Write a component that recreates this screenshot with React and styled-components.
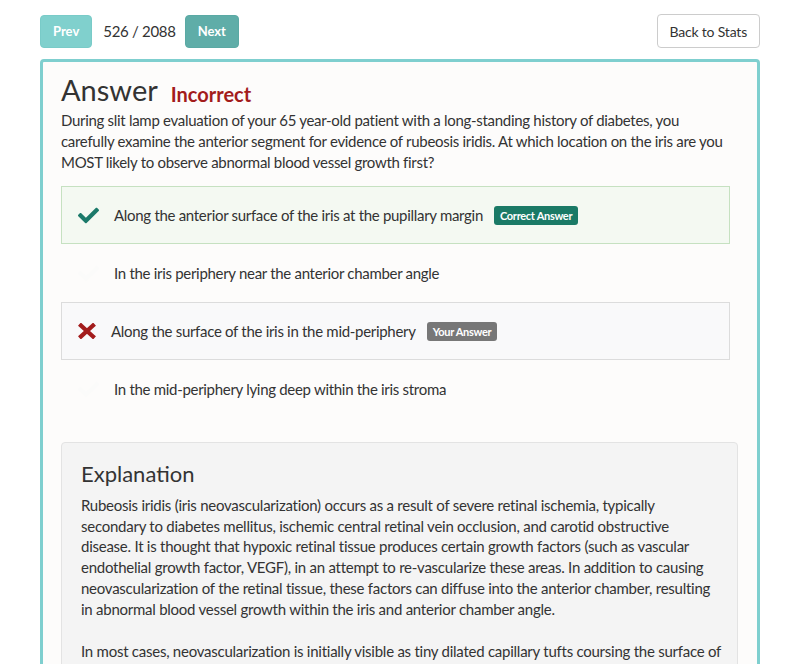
import React from 'react';
import styled, { createGlobalStyle } from 'styled-components';
import { FaCheck } from 'react-icons/fa';

const GlobalStyle = createGlobalStyle`
  body {
    margin: 0;
    background: #ffffff;
    font-family: Lato, "Open Sans", sans-serif;
    color: #333;
  }
`;

const Page = styled.div`
  padding: 14px 40px 0 40px;
  width: 720px;
`;

const Toolbar = styled.div`
  display: flex;
  align-items: center;
  justify-content: space-between;
  margin-bottom: 11px;
`;

const Pager = styled.div`
  display: flex;
  align-items: center;
  gap: 11px;
`;

const NavButton = styled.button`
  height: 33px;
  padding: 0 12px;
  margin-left: ${(p) => (p.dark ? '-2px' : '0')};
  border: 1px solid ${(p) => (p.dark ? '#5aa9a4' : '#79cbc8')};
  border-radius: 4px;
  background: ${(p) => (p.dark ? '#5fada8' : '#80d0cd')};
  color: #fff;
  font-family: Lato, sans-serif;
  font-weight: 700;
  font-size: 13px;
`;

const Counter = styled.span`
  font-size: 15px;
  letter-spacing: -0.3px;
  color: #333;
`;

const StatsButton = styled.button`
  height: 34px;
  padding: 0 12px;
  border: 1px solid #ccc;
  border-radius: 4px;
  background: #fff;
  color: #333;
  font-family: Lato, sans-serif;
  font-size: 14px;
  letter-spacing: -0.2px;
`;

const Panel = styled.div`
  border: 3px solid #7fcfcf;
  border-radius: 4px;
  background: #fdfcfb;
  padding: 10px 19px 40px 18px;
`;

const TitleRow = styled.div`
  display: flex;
  align-items: baseline;
`;

const Title = styled.h1`
  margin: 0;
  font-size: 29px;
  font-weight: 400;
  color: #333;
`;

const Verdict = styled.span`
  margin-left: 13px;
  font-size: 20px;
  font-weight: 700;
  color: #a31c1c;
  position: relative;
  top: 1px;
`;

const Question = styled.p`
  margin: 3px 0 13px;
  font-size: 15px;
  line-height: 21px;
  letter-spacing: -0.3px;
  padding-right: 10px;
`;

const Options = styled.div`
  margin-right: 8px;
  display: flex;
  flex-direction: column;
`;

const Option = styled.div`
  display: flex;
  align-items: center;
  height: 58px;
  box-sizing: border-box;
  padding: 0 16px;
  border: 1px solid ${(p) => p.border || 'transparent'};
  background: ${(p) => p.bg || 'transparent'};
  font-size: 15px;
  letter-spacing: -0.3px;
`;

const Icon = styled.span`
  display: flex;
  align-items: center;
  margin-right: ${(p) => p.gap}px;
  color: ${(p) => p.color};
  font-size: ${(p) => p.size}px;
`;

const Badge = styled.span`
  margin-left: 11px;
  padding: 3px 6px;
  border-radius: 3px;
  background: ${(p) => p.bg};
  color: #fff;
  font-size: 11px;
  font-weight: 700;
  letter-spacing: -0.3px;
`;

const Explanation = styled.div`
  margin-top: 24px;
  background: #f4f4f4;
  border: 1px solid #e3e3e3;
  border-radius: 4px;
  padding: 17px 10px 20px 19px;
`;

const ExplTitle = styled.h2`
  margin: 0 0 8px;
  font-size: 22px;
  font-weight: 400;
  color: #333;
`;

const ExplText = styled.p`
  margin: 0 0 22px;
  font-size: 15px;
  line-height: 20.7px;
  letter-spacing: -0.25px;
`;

const Cross = () => (
  <svg width="18" height="16" viewBox="0 0 18 16">
    <path d="M3 2.5 L15 13.5 M15 2.5 L3 13.5" stroke="currentColor" strokeWidth="4.2" strokeLinecap="square" />
  </svg>
);

const options = [
  { text: 'Along the anterior surface of the iris at the pupillary margin', state: 'correct' },
  { text: 'In the iris periphery near the anterior chamber angle' },
  { text: 'Along the surface of the iris in the mid-periphery', state: 'wrong' },
  { text: 'In the mid-periphery lying deep within the iris stroma' },
];

function OptionRow({ option }) {
  if (option.state === 'correct') {
    return (
      <Option bg="#f4f9f2" border="#c6e1c1">
        <Icon color="#1b7a6a" size={21} gap={15}><FaCheck /></Icon>
        {option.text}
        <Badge bg="#1a7a66">Correct Answer</Badge>
      </Option>
    );
  }
  if (option.state === 'wrong') {
    return (
      <Option bg="#f9f9fa" border="#dcdcdc">
        <Icon color="#a31c1c" size={18} gap={15}><Cross /></Icon>
        {option.text}
        <Badge bg="#777">Your Answer</Badge>
      </Option>
    );
  }
  return (
    <Option>
      <Icon color="#fbfbfa" size={21} gap={15}><FaCheck /></Icon>
      {option.text}
    </Option>
  );
}

export default function App() {
  return (
    <>
      <GlobalStyle />
      <Page>
        <Toolbar>
          <Pager>
            <NavButton>Prev</NavButton>
            <Counter>526 / 2088</Counter>
            <NavButton dark>Next</NavButton>
          </Pager>
          <StatsButton>Back to Stats</StatsButton>
        </Toolbar>
        <Panel>
          <TitleRow>
            <Title>Answer</Title>
            <Verdict>Incorrect</Verdict>
          </TitleRow>
          <Question>
            During slit lamp evaluation of your 65 year-old patient with a long-standing history of diabetes, you
            carefully examine the anterior segment for evidence of rubeosis iridis. At which location on the iris are you
            MOST likely to observe abnormal blood vessel growth first?
          </Question>
          <Options>
            {options.map((o) => (
              <OptionRow key={o.text} option={o} />
            ))}
          </Options>
          <Explanation>
            <ExplTitle>Explanation</ExplTitle>
            <ExplText>
              Rubeosis iridis (iris neovascularization) occurs as a result of severe retinal ischemia, typically<br />
              secondary to diabetes mellitus, ischemic central retinal vein occlusion, and carotid obstructive<br />
              disease. It is thought that hypoxic retinal tissue produces certain growth factors (such as vascular<br />
              endothelial growth factor, VEGF), in an attempt to re-vascularize these areas. In addition to causing<br />
              neovascularization of the retinal tissue, these factors can diffuse into the anterior chamber, resulting<br />
              in abnormal blood vessel growth within the iris and anterior chamber angle.
            </ExplText>
            <ExplText>
              In most cases, neovascularization is initially visible as tiny dilated capillary tufts coursing the surface of<br />
              the iris at the pupillary margin. As the disease progresses, new vessels extend radially across the iris
              toward the angle.
            </ExplText>
          </Explanation>
        </Panel>
      </Page>
    </>
  );
}
